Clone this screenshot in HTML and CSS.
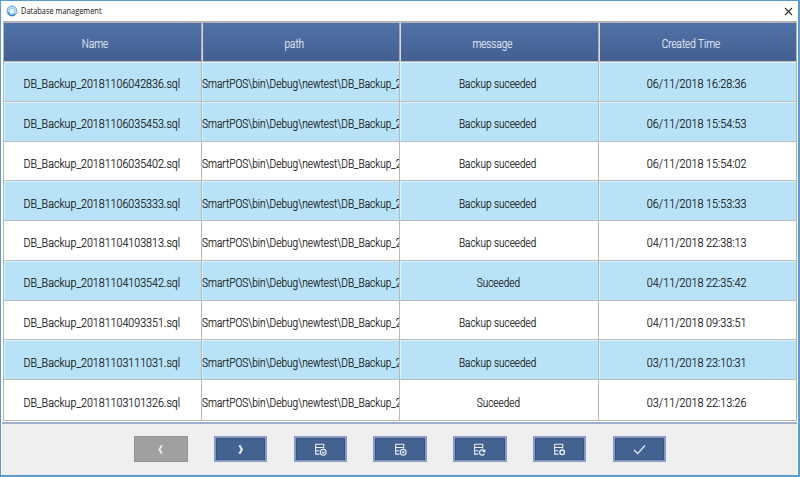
FILE: index.html
```html
<!DOCTYPE html>
<html lang="en">
<head>
<meta charset="utf-8">
<title>Database management</title>
<link rel="stylesheet" href="styles.css">
</head>
<body>
<main class="window">
  <header class="titlebar">
    <svg class="logo" viewBox="0 0 12 12"><circle cx="6" cy="6" r="5" fill="#b9def3" stroke="#67a9d8"/><path d="M2 7a4 4 0 0 0 7 2" fill="none" stroke="#3482bd" stroke-width="1.3"/><path d="M3.5 4.500 6 3l2.500 1.500v3L6 9 3.500 7.500z" fill="#e9f7ff" stroke="#8fc4e6" stroke-width=".7"/></svg>
    <h1>Database management</h1>
    <svg class="close" viewBox="0 0 9 9"><path d="M1 1l7 7M8 1 1 8" fill="none" stroke="#333" stroke-width="1.1"/></svg>
  </header>
  <section class="grid" id="grid">
    <div class="row head"><div><span>Name</span></div><div><span>path</span></div><div><span>message</span></div><div><span>Created Time</span></div></div>
  </section>
  <footer class="toolbar">
    <button class="disabled"><svg viewBox="0 0 12 12"><path d="M7.300 2 5 6l2.300 4" stroke-width="1.700"/></svg></button>
    <button><svg viewBox="0 0 12 12"><path d="M5 2l2.300 4L5 10" stroke-width="1.900"/></svg></button>
    <button><svg viewBox="0 0 12 12"><path d="M5 10.300H1.500V1.200H9V5M1.500 4.200H9M1.500 7.200H5"/><circle cx="8.500" cy="8.600" r="2.700"/><path d="M7.300 8.300 8.500 9.500l1.200-1.200"/></svg></button>
    <button><svg viewBox="0 0 12 12"><path d="M5 10.300H1.500V1.200H9V5M1.500 4.200H9M1.500 7.200H5"/><circle cx="8.500" cy="8.600" r="2.700"/><path d="M7.300 8.600h2.400M8.500 7.400v2.400"/></svg></button>
    <button><svg viewBox="0 0 12 12"><path d="M5 10.300H1.500V1.200H9V5M1.500 4.200H9M1.500 7.200H5"/><path d="M10.300 7.300A2.400 2.400 0 1 0 10.500 10M10.900 5.900v2.100H8.800" stroke-width="1.200"/></svg></button>
    <button><svg viewBox="0 0 12 12"><path d="M5 10.300H1.500V1.200H9V5M1.500 4.200H9M1.500 7.200H5"/><circle cx="8.500" cy="8.600" r="2.100" stroke-width="1.300"/></svg></button>
    <button><svg viewBox="0 0 12 12"><path d="M1 6.500 4.300 9.800 11 2.300" stroke-width="1.200"/></svg></button>
  </footer>
</main>
<script src="grid.js"></script>
</body>
</html>
```
FILE: grid.js
```js
const backups = [
  ["20181106042836", "Backup suceeded", "06/11/2018 16:28:36", true],
  ["20181106035453", "Backup suceeded", "06/11/2018 15:54:53", true],
  ["20181106035402", "Backup suceeded", "06/11/2018 15:54:02", false],
  ["20181106035333", "Backup suceeded", "06/11/2018 15:53:33", true],
  ["20181104103813", "Backup suceeded", "04/11/2018 22:38:13", false],
  ["20181104103542", "Suceeded", "04/11/2018 22:35:42", true],
  ["20181104093351", "Backup suceeded", "04/11/2018 09:33:51", false],
  ["20181103111031", "Backup suceeded", "03/11/2018 23:10:31", true],
  ["20181103101326", "Suceeded", "03/11/2018 22:13:26", false]
];
const grid = document.getElementById("grid");
for (const [stamp, message, created, shaded] of backups) {
  const row = document.createElement("div");
  row.className = shaded ? "row shaded" : "row";
  const cells = [`DB_Backup_${stamp}.sql`, "SmartPOS\\bin\\Debug\\newtest\\DB_Backup_2", message, created];
  cells.forEach((text, i) => {
    const cell = document.createElement("div");
    cell.className = ["name", "path", "message", "time"][i];
    const label = document.createElement("span");
    label.textContent = text;
    cell.append(label);
    row.append(cell);
  });
  grid.append(row);
}
```
FILE: styles.css
```css
* { box-sizing: border-box; }
body { margin: 0; background: #2f75b5; font-family: Roboto, "Liberation Sans", sans-serif; }
.window {
  display: flex; flex-direction: column;
  width: 800px; height: 477px;
  border: 1px solid #5b9bd5; border-right-width: 2px; border-bottom-width: 2px;
  background: #fff; overflow: hidden;
}
.titlebar { display: flex; align-items: center; flex: 0 0 20px; padding: 0 5px 0 5px; }
.logo { width: 12px; height: 12px; }
.titlebar h1 {
  flex: 1; margin: 0 0 0 3px;
  font: 500 8.2px/20px "Open Sans", sans-serif; color: #111;
  transform: scaleX(.905); transform-origin: left;
}
.close { width: 9px; height: 9px; }
.grid {
  display: grid; grid-template-rows: 39px repeat(9, 1fr);
  flex: 0 0 400px; margin: 0 1px 0 2px;
  border: 2px solid #b4b4b4; border-width: 2px 1px 1px;
  background: #fff;
}
.row { display: grid; grid-template-columns: 198px 198px 199px 1fr; min-height: 0; }
.row > div {
  display: flex; align-items: center; justify-content: center;
  min-width: 0; overflow: hidden; padding: 4px 2px 0 0;
  border-right: 1px solid #b8b8b8; border-bottom: 1px solid #bcbcbc;
  font-size: 13.6px; font-weight: 300; color: #151515; white-space: nowrap;
  -webkit-text-stroke: .2px currentColor;
}
.row > div:last-child { border-right: 0; }
.row:last-child > div { border-bottom: 0; }
.row span { flex: none; transform: scaleX(.785); }
.shaded > div { background: #b8e2f7; box-shadow: inset 1px 1px #dff2fb; }
.head > div {
  padding: 2px 14px 0 0;
  background: linear-gradient(#5072a8, #445f91);
  border-left: 1px solid #d8dbe0; border-right-color: #aaa; color: #e4ebf6;
}
.head > div:first-child { border-left: 0; }
.row.head span { transform: scaleX(.73); }
.row > .path { justify-content: flex-start; padding-right: 0; }
.row .path span { transform: scaleX(.742); transform-origin: left; }
.row .message span { transform: scaleX(.735); }
.row .time span { transform: scaleX(.795); }
.toolbar {
  display: flex; align-items: flex-start; gap: 26.300px; flex: 1;
  padding: 12px 0 0 132px; margin: 1px 1px 0;
  border-top: 2px solid #9cafd2; background: #efefef;
}
button {
  display: flex; align-items: center; justify-content: center;
  width: 53.500px; height: 26px; padding: 0;
  border: 2px solid #8a9dc0; background: #44628f;
  box-shadow: inset 0 0 0 1px #34548a;
}
button svg { width: 13px; height: 13px; fill: none; stroke: #e8eef8; stroke-width: 1; }
.disabled { border: 1px solid #949494; background: #a0a0a0; box-shadow: none; }
```
